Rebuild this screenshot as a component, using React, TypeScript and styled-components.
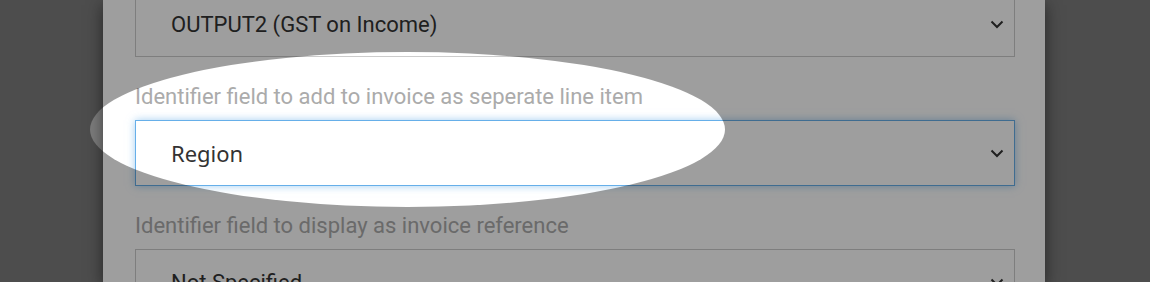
import React from "react";
import styled, { createGlobalStyle } from "styled-components";

const Global = createGlobalStyle`
  html, body { margin: 0; padding: 0; }
  body { background: #7c7c7c; overflow: hidden; }
  #root { width: 1150px; height: 282px; overflow: hidden; }
`;

const Page = styled.div`
  position: relative;
  width: 1150px;
  height: 282px;
  overflow: hidden;
  display: flex;
  padding-left: 103px;
  box-sizing: border-box;
`;

const Panel = styled.div`
  width: 942px;
  background: #ffffff;
  box-shadow: 0 5px 15px rgba(0, 0, 0, 0.5);
  padding: 0 30px 0 32px;
  box-sizing: border-box;
`;

const Form = styled.div`
  margin-top: -9px;
  display: flex;
  flex-direction: column;
`;

const Group = styled.div`
  margin-bottom: 29px;
`;

const Label = styled.label`
  display: block;
  font-family: Roboto, "Liberation Sans", sans-serif;
  font-size: 22px;
  line-height: 22px;
  color: #ababab;
  margin-bottom: 12px;
`;

const Select = styled.div<{ $focused?: boolean; $system?: boolean }>`
  height: 66px;
  box-sizing: border-box;
  border: 1px solid ${(p) => (p.$focused ? "#66afe9" : "#cccccc")};
  box-shadow: ${(p) =>
    p.$focused ? "0 0 8px rgba(102, 175, 233, 0.6)" : "none"};
  background: #fff;
  display: flex;
  align-items: center;
  justify-content: space-between;
  padding: 0 10px 0 35px;
  font-family: ${(p) =>
    p.$system
      ? '"Noto Sans", "Open Sans", sans-serif'
      : 'Roboto, "Liberation Sans", sans-serif'};
  font-size: 22px;
  color: #333333;
`;

const Value = styled.span`
  white-space: nowrap;
`;

const ChevronIcon = styled.svg`
  flex: none;
`;

const Chevron = () => (
  <ChevronIcon width="14" height="9" viewBox="0 0 14 9">
    <path d="M1.5 1.5 L7 7 L12.5 1.5" fill="none" stroke="#333" strokeWidth="2" />
  </ChevronIcon>
);

const Spotlight = styled.div`
  position: absolute;
  left: 90px;
  top: 52px;
  width: 635px;
  height: 155px;
  border-radius: 50%;
  box-shadow: 0 0 0 3000px rgba(0, 0, 0, 0.38);
  pointer-events: none;
`;

export default function App() {
  return (
    <>
      <Global />
      <Page>
        <Panel>
          <Form>
            <Group>
              <Select>
                <Value>OUTPUT2 (GST on Income)</Value>
                <Chevron />
              </Select>
            </Group>
            <Group>
              <Label>Identifier field to add to invoice as seperate line item</Label>
              <Select $focused $system>
                <Value>Region</Value>
                <Chevron />
              </Select>
            </Group>
            <Group>
              <Label>Identifier field to display as invoice reference</Label>
              <Select>
                <Value>Not Specified</Value>
                <Chevron />
              </Select>
            </Group>
          </Form>
        </Panel>
        <Spotlight />
      </Page>
    </>
  );
}
